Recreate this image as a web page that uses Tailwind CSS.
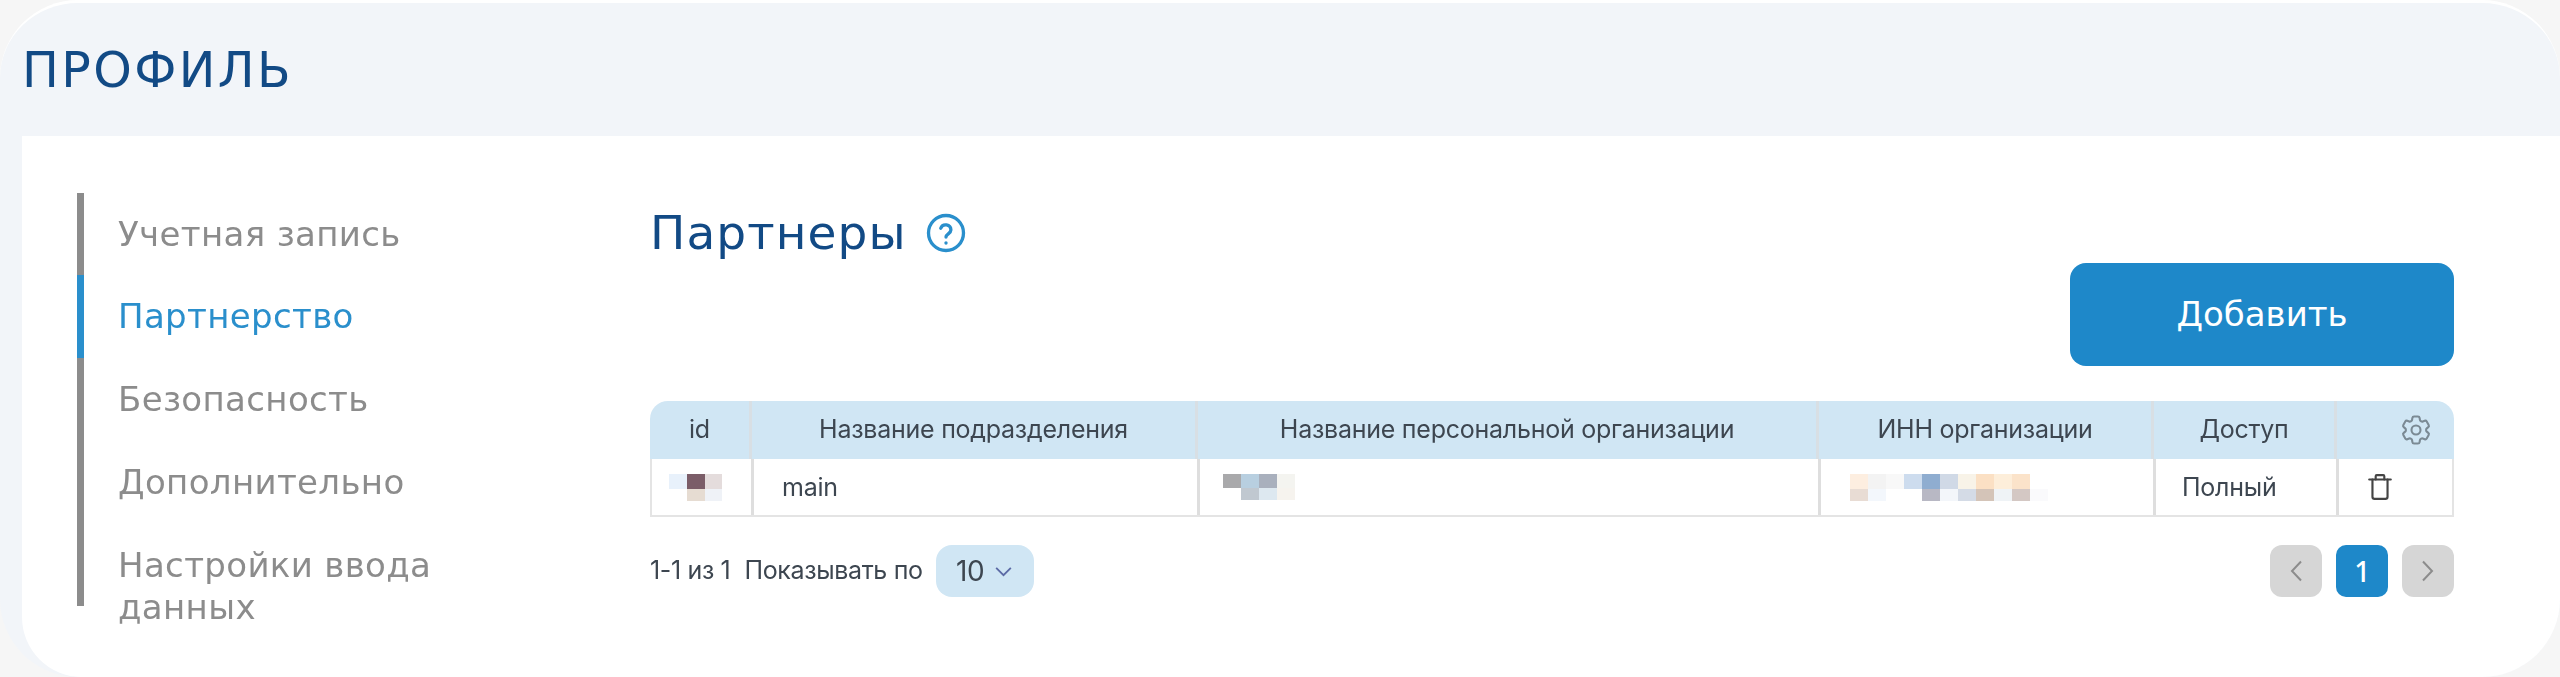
<!DOCTYPE html>
<html lang="ru">
<head>
<meta charset="utf-8">
<title>Профиль</title>
<script src="https://cdn.jsdelivr.net/npm/@tailwindcss/browser@4"></script>
</head>
<body class="m-0 h-[677px] w-[2560px] overflow-hidden bg-[#f6f6f6]">
<div class="flex h-[677px] w-[2560px] flex-col overflow-hidden rounded-t-[78px] rounded-b-[78px] border-t-[3px] border-white bg-[#f2f5f9] font-['DejaVu_Sans',sans-serif] blur-[0.5px]">
  <header class="flex h-[133px] shrink-0 items-center pl-[22px] pt-[3px]">
    <h1 class="text-[49px] leading-[56px] tracking-[2.4px] text-[#124a85]">ПРОФИЛЬ</h1>
  </header>
  <div class="ml-[22px] flex flex-1 rounded-bl-[60px] bg-white pt-[57px]">
    <nav class="ml-[55px] h-[413px] w-[370px] shrink-0 border-l-[7px] border-[#8c8c8c] text-[34px] leading-[42px] tracking-[0.35px] text-[#8c8c8c]">
      <div class="h-[82px] pl-[34px] pt-[20px]">Учетная запись</div>
      <div class="-ml-[7px] h-[83px] border-l-[7px] border-[#2a8fcc] pl-[34px] pt-[20px] text-[#2a8fcc]">Партнерство</div>
      <div class="h-[83px] pl-[34px] pt-[20px]">Безопасность</div>
      <div class="h-[83px] pl-[34px] pt-[20px]">Дополнительно</div>
      <div class="h-[82px] pl-[34px] pt-[20px]">Настройки ввода данных</div>
    </nav>
    <main class="ml-[203px] w-[1804px] pt-[11px]">
      <div class="flex h-[57px] items-center">
        <h2 class="text-[47px] leading-[56px] tracking-[1.1px] text-[#124a85]">Партнеры</h2>
        <svg class="ml-[18px] h-[42px] w-[42px] text-[#2a8fcc]" viewBox="0 0 24 24" fill="none" stroke="currentColor" stroke-width="1.9" stroke-linecap="round"><circle cx="12" cy="12" r="10"/><path d="M9 9.3a3 3 0 0 1 5.8 1c0 2-2.8 2.3-2.8 4"/><path d="M12 17.6v.1"/></svg>
      </div>
      <div class="mt-[2px] flex justify-end">
        <button class="flex h-[103px] w-[384px] items-center justify-center rounded-[16px] bg-[#1e88c9] text-[34px] text-white">Добавить</button>
      </div>
      <div class="mt-[35px] overflow-hidden rounded-t-[18px] border-b-[2px] border-[#e4e4e4] font-['Inter',sans-serif] text-[25px] tracking-[-0.25px] text-[#3d4650]">
        <div class="grid h-[58px] grid-cols-[102px_446px_621px_335px_183px_117px] bg-[#d0e6f4]">
          <div class="flex items-center justify-center border-r-[3px] border-[#d8dfe4]">id</div>
          <div class="flex items-center justify-center border-r-[3px] border-[#d8dfe4]">Название подразделения</div>
          <div class="flex items-center justify-center border-r-[3px] border-[#d8dfe4]">Название персональной организации</div>
          <div class="flex items-center justify-center border-r-[3px] border-[#d8dfe4]">ИНН организации</div>
          <div class="flex items-center justify-center border-r-[3px] border-[#d8dfe4]">Доступ</div>
          <div class="flex items-center justify-end pr-[20px]">
            <svg class="h-[36px] w-[36px] text-[#7b8a94]" viewBox="0 0 24 24" fill="none" stroke="currentColor" stroke-width="1.4" stroke-linejoin="round"><path d="M9.594 3.94c.09-.542.56-.94 1.11-.94h2.593c.55 0 1.02.398 1.11.94l.213 1.281c.063.374.313.686.645.87.074.04.147.083.22.127.325.196.72.257 1.075.124l1.217-.456a1.125 1.125 0 0 1 1.37.49l1.296 2.247a1.125 1.125 0 0 1-.26 1.431l-1.003.827c-.293.241-.438.613-.43.992a7.723 7.723 0 0 1 0 .255c-.008.378.137.75.43.991l1.004.827c.424.35.534.955.26 1.43l-1.298 2.247a1.125 1.125 0 0 1-1.369.491l-1.217-.456c-.355-.133-.75-.072-1.076.124a6.47 6.47 0 0 1-.22.128c-.331.183-.581.495-.644.869l-.213 1.281c-.09.543-.56.94-1.11.94h-2.594c-.55 0-1.019-.398-1.11-.94l-.213-1.281c-.062-.374-.312-.686-.644-.87a6.52 6.52 0 0 1-.22-.127c-.325-.196-.72-.257-1.076-.124l-1.217.456a1.125 1.125 0 0 1-1.369-.49l-1.297-2.247a1.125 1.125 0 0 1 .26-1.431l1.004-.827c.292-.24.437-.613.43-.991a6.932 6.932 0 0 1 0-.255c.007-.38-.138-.751-.43-.992l-1.004-.827a1.125 1.125 0 0 1-.26-1.43l1.297-2.247a1.125 1.125 0 0 1 1.37-.491l1.216.456c.356.133.751.072 1.076-.124.072-.044.146-.086.22-.128.332-.183.582-.495.644-.869l.214-1.28Z"/><path d="M15 12a3 3 0 1 1-6 0 3 3 0 0 1 6 0Z"/></svg>
          </div>
        </div>
        <div class="grid h-[56px] grid-cols-[102px_446px_621px_335px_183px_117px] border-l-[2px] border-r-[2px] border-[#e4e4e4] bg-white">
          <div class="flex items-center border-r-[3px] border-[#dedede] pl-[17px]">
            <div class="grid grid-cols-[18px_18px_17px] grid-rows-[15px_12px]">
              <div class="bg-[#e8f1fb]"></div><div class="bg-[#7b5d68]"></div><div class="bg-[#e4dcdc]"></div>
              <div></div><div class="bg-[#e6dcd2]"></div><div class="bg-[#eff2f7]"></div>
            </div>
          </div>
          <div class="flex items-center border-r-[3px] border-[#dedede] pl-[28px] pt-[2px]">main</div>
          <div class="flex items-center border-r-[3px] border-[#dedede] pl-[23px]">
            <div class="grid grid-cols-[18px_18px_18px_18px] grid-rows-[14px_12px]">
              <div class="bg-[#a9a9ab]"></div><div class="bg-[#b8cfe0]"></div><div class="bg-[#a9b0bd]"></div><div class="bg-[#f4f4f0]"></div>
              <div></div><div class="bg-[#c0c8d0]"></div><div class="bg-[#dde8f0]"></div><div class="bg-[#f6f3ee]"></div>
            </div>
          </div>
          <div class="flex items-center border-r-[3px] border-[#dedede] pl-[29px]">
            <div class="grid grid-cols-[repeat(11,18px)] grid-rows-[15px_12px]">
              <div class="bg-[#fdeee0]"></div><div class="bg-[#f3f3f3]"></div><div class="bg-[#f8f8f8]"></div><div class="bg-[#cddcee]"></div><div class="bg-[#8fadd0]"></div><div class="bg-[#d0d9e6]"></div><div class="bg-[#f8f3e8]"></div><div class="bg-[#fbe0c4]"></div><div class="bg-[#fdeeda]"></div><div class="bg-[#fbe3ca]"></div><div></div>
              <div class="bg-[#e8dcd4]"></div><div class="bg-[#f3f7fc]"></div><div></div><div></div><div class="bg-[#b8b8c4]"></div><div class="bg-[#f3f6fa]"></div><div class="bg-[#d4dbe6]"></div><div class="bg-[#d4c4b8]"></div><div class="bg-[#eff3f6]"></div><div class="bg-[#d4c8c4]"></div><div class="bg-[#fafafc]"></div>
            </div>
          </div>
          <div class="flex items-center border-r-[3px] border-[#dedede] pl-[26px] pt-[2px]">Полный</div>
          <div class="flex items-center pl-[28px]">
            <svg class="h-[28px] w-[26px] text-[#444]" viewBox="0 0 24 26" fill="none" stroke="currentColor" stroke-width="2" stroke-linecap="round" stroke-linejoin="round"><path d="M2 6h20"/><path d="M8 6V3a1 1 0 0 1 1-1h6a1 1 0 0 1 1 1v3"/><path d="M5 6v16a2 2 0 0 0 2 2h10a2 2 0 0 0 2-2V6"/></svg>
          </div>
        </div>
      </div>
      <div class="mt-[28px] flex h-[52px] items-center font-['Inter',sans-serif] text-[25px] tracking-[-0.35px] text-[#3d4650]">
        <span>1-1 из 1</span>
        <span class="ml-[14px]">Показывать по</span>
        <div class="ml-[13px] flex h-[52px] w-[98px] items-center justify-center gap-[10px] rounded-[16px] bg-[#d0e6f4] text-[28px]">
          <span>10</span>
          <svg class="h-[11px] w-[19px] text-[#5b6aa5]" viewBox="0 0 20 12" fill="none" stroke="currentColor" stroke-width="2"><path d="M2 2l8 8 8-8"/></svg>
        </div>
        <div class="ml-auto flex gap-[14px]">
          <button class="flex h-[52px] w-[52px] items-center justify-center rounded-[12px] bg-[#d6d6d6]">
            <svg class="h-[22px] w-[12px] text-[#8c8c8c]" viewBox="0 0 12 22" fill="none" stroke="currentColor" stroke-width="2"><path d="M11 1.5 2 11l9 9.5"/></svg>
          </button>
          <button class="flex h-[52px] w-[52px] items-center justify-center rounded-[10px] bg-[#1e88c9] font-['Noto_Sans',sans-serif] text-[28px] font-medium text-white">1</button>
          <button class="flex h-[52px] w-[52px] items-center justify-center rounded-[12px] bg-[#d6d6d6]">
            <svg class="h-[22px] w-[12px] text-[#8c8c8c]" viewBox="0 0 12 22" fill="none" stroke="currentColor" stroke-width="2"><path d="M1 1.5 10 11l-9 9.5"/></svg>
          </button>
        </div>
      </div>
    </main>
  </div>
</div>
</body>
</html>
